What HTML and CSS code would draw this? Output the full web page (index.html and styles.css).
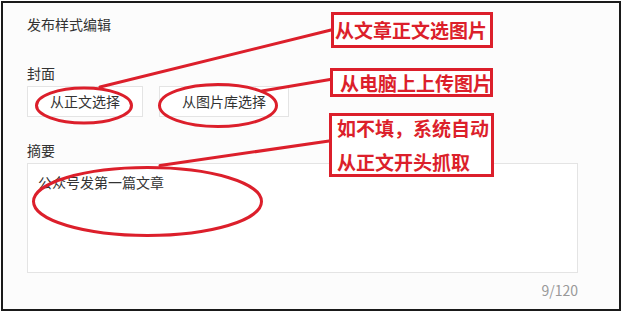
FILE: index.html
```html
<!DOCTYPE html>
<html lang="zh-CN">
<head>
<meta charset="utf-8">
<title>发布样式编辑</title>
<link rel="stylesheet" href="styles.css">
</head>
<body>
<div class="page">
  <div class="frame">
    <div class="title">发布样式编辑</div>
    <div class="label label-cover">封面</div>
    <div class="btns">
      <span class="btn">从正文选择</span>
      <span class="btn">从图片库选择</span>
    </div>
    <div class="label label-summary">摘要</div>
    <div class="summary">公众号发第一篇文章</div>
    <div class="counter">9/120</div>
  </div>

  <svg class="marks" width="623" height="313" viewBox="0 0 623 313" xmlns="http://www.w3.org/2000/svg">
    <g fill="none" stroke="#dc1f2b" stroke-width="3" stroke-linecap="round">
      <ellipse cx="84" cy="105.5" rx="47.5" ry="17.5"/>
      <ellipse cx="218" cy="105.5" rx="58.5" ry="21"/>
      <ellipse cx="147.5" cy="201.5" rx="114" ry="34"/>
      <line x1="100" y1="87" x2="331" y2="30"/>
      <line x1="262" y1="91" x2="330" y2="79.5"/>
      <line x1="160" y1="165.5" x2="329" y2="141"/>
    </g>
  </svg>

  <div class="note note-1">从文章正文选图片</div>
  <div class="note note-2">从电脑上上传图片</div>
  <div class="note note-3"><span>如不填，系统自动</span><span>从正文开头抓取</span></div>
</div>
</body>
</html>
```

FILE: styles.css
```css
html, body {
  margin: 0;
  padding: 0;
  background: #ffffff;
}

.page {
  position: relative;
  width: 623px;
  height: 313px;
  box-sizing: border-box;
  padding: 1px 0 0 1px;
  font-family: "Noto Sans CJK SC", "Noto Sans", sans-serif;
  font-size: 14px;
  color: #333333;
}

.frame {
  width: 620px;
  height: 310px;
  box-sizing: border-box;
  border: 2px solid #1a1a1a;
  background: #fcfcfc;
  padding: 11px 0 0 24px;
}

.title {
  line-height: 20px;
}

.label {
  line-height: 20px;
}

.label-cover {
  margin-top: 29px;
}

.btns {
  display: flex;
  gap: 16px;
  margin-top: 3px;
}

.btn {
  height: 31px;
  box-sizing: border-box;
  padding: 0 22px;
  border: 1px solid #e4e4e4;
  background: #ffffff;
  line-height: 29px;
  color: #333333;
}

.label-summary {
  margin-top: 23px;
}

.summary {
  margin-top: 3px;
  width: 551px;
  height: 110px;
  box-sizing: border-box;
  border: 1px solid #e4e4e4;
  background: #ffffff;
  padding: 8px 10px;
  line-height: 20px;
  color: #333333;
}

.counter {
  margin-top: 7px;
  width: 551px;
  text-align: right;
  line-height: 20px;
  color: #999999;
}

.marks {
  position: absolute;
  left: 0;
  top: 0;
  pointer-events: none;
}

.note {
  position: absolute;
  box-sizing: border-box;
  border: 3px solid #dc1f2b;
  background: #ffffff;
  color: #dc1f2b;
  font-family: "Noto Sans CJK SC", sans-serif;
  font-weight: 700;
  font-size: 19px;
  display: flex;
  align-items: center;
  white-space: nowrap;
}

.note-1 {
  left: 331px;
  top: 12px;
  width: 162px;
  height: 36px;
  padding-left: 1px;
  line-height: 24px;
}

.note-2 {
  left: 330px;
  top: 68px;
  width: 163px;
  height: 29px;
  padding-left: 7px;
  line-height: 23px;
}

.note-3 {
  left: 329px;
  top: 113px;
  width: 165px;
  height: 64px;
  padding-left: 5px;
  flex-direction: column;
  align-items: flex-start;
  justify-content: center;
  line-height: 34px;
}
```
